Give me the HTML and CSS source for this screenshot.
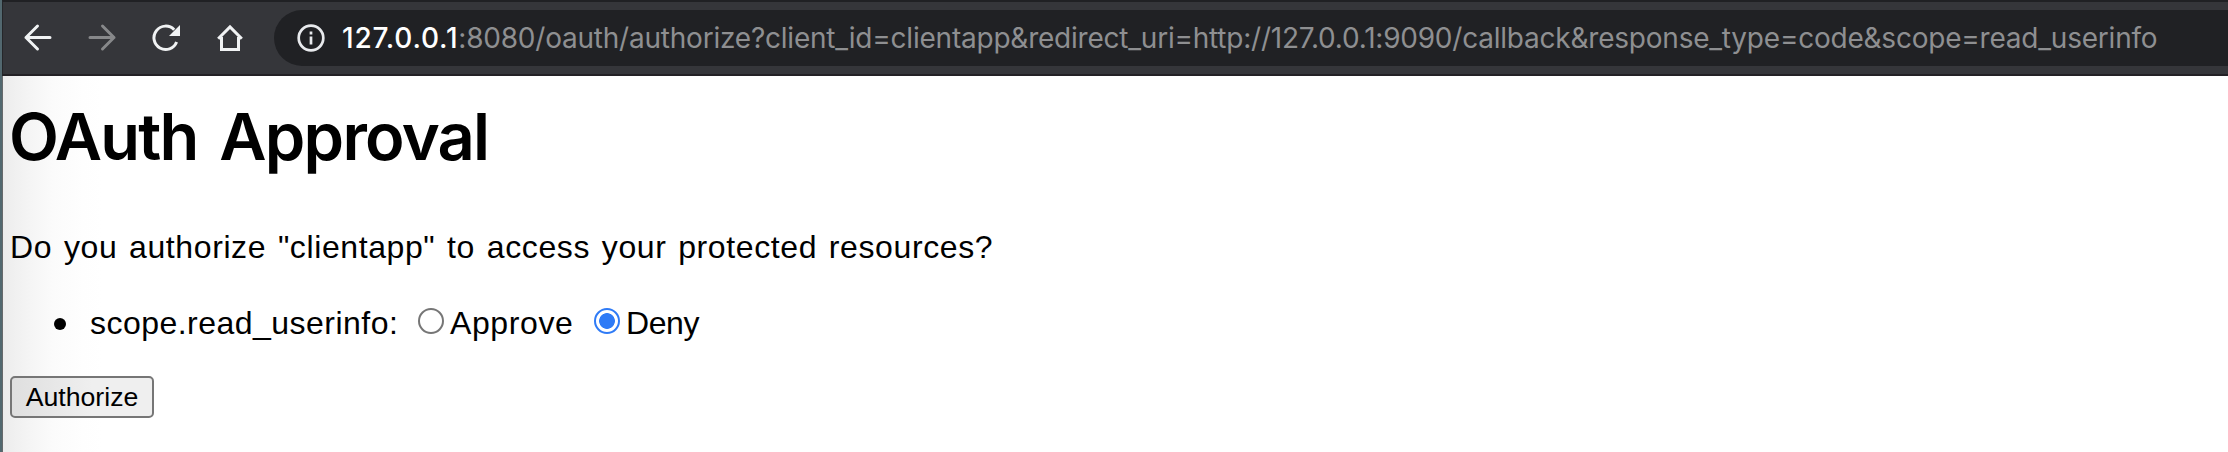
FILE: index.html
```html
<!DOCTYPE html>
<html lang="en">
<head>
<meta charset="utf-8">
<title>OAuth Approval</title>
<link rel="stylesheet" href="styles.css">
</head>
<body>
<div class="window">
  <header class="toolbar">
    <nav class="nav">
      <svg class="icon" viewBox="0 0 32 32"><path d="M28 15.5H4M15.500 4L4 15.500L15.500 27" stroke-linecap="round" stroke-linejoin="round"/></svg>
      <svg class="icon icon-off" viewBox="0 0 32 32"><path d="M4 15.500H28M16.500 4L28 15.500L16.500 27" stroke-linecap="round" stroke-linejoin="round"/></svg>
      <svg class="icon" viewBox="0 0 32 32"><path d="M26.600 20A11.700 11.700 0 1 1 24.200 7.800"/><path class="solid" d="M30 3V14H19Z"/></svg>
      <svg class="icon" viewBox="0 0 32 32"><path d="M4.200 16.700L16 4.900L27.800 16.700M7.500 15V27.500H24.500V15"/></svg>
    </nav>
    <div class="omnibox">
      <svg class="info" viewBox="0 0 28 28"><circle cx="14" cy="14" r="12.300"/><path d="M14 12.500V20.500M14 7.500V10.500"/></svg>
      <div class="url"><span class="host">127.0.0.1</span><span class="path">:8080/oauth/authorize?client_id=clientapp&amp;redirect_uri=http://127.0.0.1:9090/callback&amp;response_type=code&amp;scope=read_userinfo</span></div>
    </div>
  </header>
  <main class="page">
    <h1 class="title">OAuth Approval</h1>
    <p class="question">Do you authorize "clientapp" to access your protected resources?</p>
    <form class="form">
      <ul class="scopes">
        <li class="scope">
          <span class="bullet"></span>
          <span class="scope-name">scope.read_userinfo:</span>
          <label class="choice"><span class="radio"></span><span class="approve">Approve</span></label>
          <label class="choice"><span class="radio radio-on"></span><span class="deny">Deny</span></label>
        </li>
      </ul>
      <button class="submit" type="button">Authorize</button>
    </form>
  </main>
</div>
</body>
</html>
```
FILE: styles.css
```css
* { box-sizing: border-box; }
body { margin: 0; background: #fff; overflow: hidden; }
.window {
  height: 452px;
  border-left: 2px solid #52686f;
  font-family: "Liberation Sans", Arial, sans-serif;
  color: #000;
}
.toolbar {
  display: flex;
  height: 76px;
  border-top: 2px solid #202124;
  border-bottom: 2px solid #232125;
  border-left: 1px solid #252629;
  background: #35363a;
  padding-top: 8px;
}
.nav { display: flex; gap: 32px; padding: 12px 0 0 19px; width: 271px; flex: none; }
.icon { width: 32px; height: 32px; flex: none; fill: none; stroke: #f1f3f4; stroke-width: 3; }
.icon-off { stroke: #87888a; }
.icon .solid { fill: #f1f3f4; stroke: none; }
.omnibox {
  display: flex;
  flex: 1;
  height: 56px;
  padding-left: 23px;
  border-radius: 28px 0 0 28px;
  background: #202124;
  align-items: center;
}
.info { width: 28px; height: 28px; flex: none; fill: none; stroke: #e8eaed; stroke-width: 2.700; }
.url {
  padding-left: 17px;
  font: 28px/56px Inter, sans-serif;
  white-space: nowrap;
  color: #8e8f91;
}
.host { color: #fff; font-weight: 500; letter-spacing: 0.800px; }
.path { letter-spacing: -0.220px; }
.page {
  height: 376px;
  padding: 23px 0 0 8px;
  border-left: 1px solid #66696b;
  background: linear-gradient(90deg, #ececec 0, #f4f4f4 24px, #fbfbfb 50px, #fefefe 80px, #fff 100px);
}
.title { margin: 0 0 0 -2px; font: 600 65px/76px Inter, sans-serif; letter-spacing: -1.750px; word-spacing: 7px; white-space: nowrap; }
.question { margin: 53px 0 0 -1px; font-size: 32px; line-height: 38px; letter-spacing: 0.600px; word-spacing: 2.300px; white-space: nowrap; }
.scopes { list-style: none; margin: 38px 0 0; padding: 0 0 0 43px; }
.scope { display: flex; height: 38px; font-size: 32px; line-height: 38px; align-items: center; white-space: nowrap; }
.bullet { width: 12px; height: 12px; margin: 2px 24px 0 0; border-radius: 50%; background: #000; }
.scope-name { width: 328px; letter-spacing: 0.470px; }
.choice { display: flex; align-items: center; width: 176px; gap: 6px; }
.approve { letter-spacing: 0.600px; }
.deny { letter-spacing: -0.400px; }
.radio { width: 26px; height: 26px; margin-bottom: 4px; flex: none; border: 2px solid #767676; border-radius: 50%; background: #fff; }
.radio-on { border-color: #2f7bf6; background: radial-gradient(circle, #2f7bf6 7.500px, #fff 8.200px); }
.submit {
  display: block;
  width: 144px;
  height: 42px;
  margin: 34px 0 0 -1px;
  padding: 0;
  border: 2px solid #767676;
  border-radius: 5px;
  background: linear-gradient(90deg, #dfdfdf, #efefef 80px);
  color: #000;
  font: 26.670px/36px "Liberation Sans", Arial, sans-serif;
}
```
